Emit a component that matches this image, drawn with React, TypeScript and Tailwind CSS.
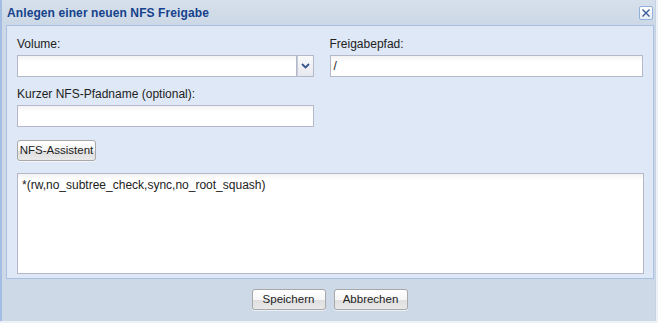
import React from "react";

const font = { fontFamily: '"Liberation Sans", Arial, sans-serif' };

function Btn({ label, className = "" }: { label: string; className?: string }) {
  return (
    <button
      className={
        "h-[21px] rounded-[3px] border border-[#a8a8a8] bg-[linear-gradient(#ffffff_0%,#f6f6f6_50%,#dedede_51%,#e9e9e9_100%)] text-[11.5px] text-[#222] leading-none shadow-[0_1px_0_rgba(255,255,255,0.6)] " +
        className
      }
    >
      {label}
    </button>
  );
}

export default function App() {
  return (
    <div className="w-[658px] h-[323px] bg-[#eef1f5]" style={font}>
      <div className="w-[656px] h-[321px] bg-[#ced9e7] border-l-2 border-[#a3bde3] border-r border-r-[#c7d3e3] flex flex-col">
        {/* title bar */}
        <div className="h-[25px] flex items-center justify-between pl-[5px] pr-[2px] bg-[linear-gradient(#d6e0ec,#cdd8e6)]">
          <span className="text-[12px] font-bold text-[#15428b] tracking-[0.1px]">
            Anlegen einer neuen NFS Freigabe
          </span>
          <div className="w-[14px] h-[14px] mt-[1px] border border-[#8fb0db] bg-[linear-gradient(#ffffff,#e8eef7)] rounded-[2px] flex items-center justify-center">
            <svg width="10" height="10" viewBox="0 0 10 10">
              <path d="M1.5 1.5 L8.5 8.5 M8.5 1.5 L1.5 8.5" stroke="#3b5a9a" strokeWidth="1.4" />
            </svg>
          </div>
        </div>
        {/* body */}
        <div className="ml-[4px] w-[648px] h-[254px] border border-[#a9c0e0] bg-[#dfe8f6] px-[10px] pt-[11px] text-[12px] text-[#222]">
          <div className="flex gap-[16px]">
            <div className="w-[297px]">
              <div className="h-[15px] leading-[15px]">Volume:</div>
              <div className="mt-[3px] flex h-[22px]">
                <div className="flex-1 border border-[#b5b8c8] bg-[linear-gradient(#f3f3f3,#ffffff_6px)]" />
                <div className="w-[17px] border border-[#b5b8c8] border-l-[#c6c9d6] bg-[linear-gradient(#fafafa,#e6e9ef)] flex items-center justify-center">
                  <svg width="9" height="6" viewBox="0 0 9 6">
                    <path d="M1 1 L4.5 4.5 L8 1" stroke="#39578c" strokeWidth="1.8" fill="none" />
                  </svg>
                </div>
              </div>
              <div className="mt-[10px] h-[15px] leading-[15px]">Kurzer NFS-Pfadname (optional):</div>
              <div className="mt-[3px] h-[22px] border border-[#b5b8c8] bg-[linear-gradient(#f3f3f3,#ffffff_6px)]" />
            </div>
            <div className="w-[314px]">
              <div className="h-[15px] leading-[15px]">Freigabepfad:</div>
              <div className="mt-[3px] h-[22px] border border-[#b5b8c8] bg-[linear-gradient(#f3f3f3,#ffffff_6px)] px-[3px] leading-[20px]">
                /
              </div>
            </div>
          </div>
          <Btn label="NFS-Assistent" className="mt-[13px] w-[79px] block" />
          <div className="mt-[12px] w-[627px] h-[101px] border border-[#b5b8c8] bg-[linear-gradient(#f3f3f3,#ffffff_6px)] px-[4px] pt-[4px] leading-[15px]">
            *(rw,no_subtree_check,sync,no_root_squash)
          </div>
        </div>
        {/* footer */}
        <div className="flex justify-center gap-[8px] pt-[10px] pl-[2px]">
          <Btn label="Speichern" className="w-[74px]" />
          <Btn label="Abbrechen" className="w-[74px]" />
        </div>
      </div>
    </div>
  );
}
